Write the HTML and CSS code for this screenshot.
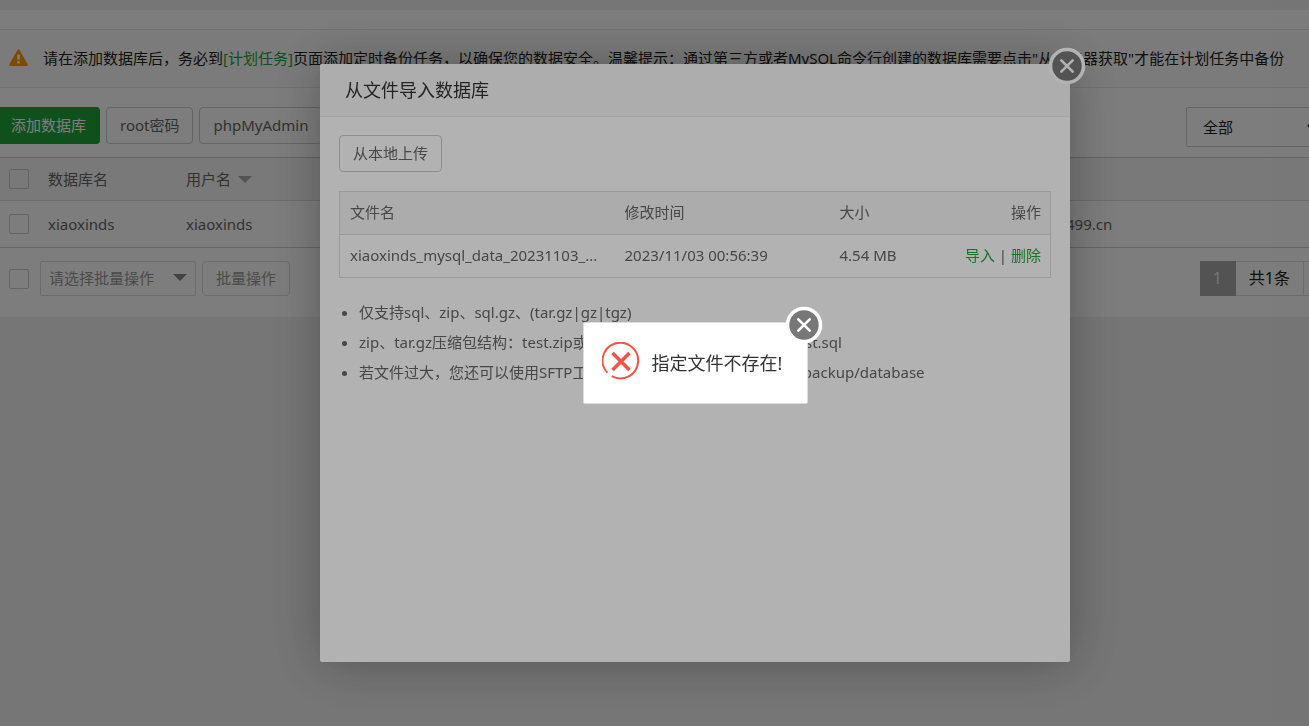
FILE: index.html
```
<!DOCTYPE html>
<html lang="zh-CN">
<head>
  <meta charset="UTF-8">
  <meta name="viewport" content="width=device-width, initial-scale=1.0">
  <title>数据库</title>
  <link rel="stylesheet" href="styles.css">
</head>
<body>
  <main class="panel">
    <div class="notice">
      <svg class="notice-icon" viewBox="0 0 18 16" aria-hidden="true">
        <path d="M8.1.8a1 1 0 0 1 1.8 0l7.8 13.7a1 1 0 0 1-.9 1.5H1.2a1 1 0 0 1-.9-1.5z" fill="#f90"/>
        <path d="M7.6 5.2h2.8l-.4 5H8zM7.8 11.4h2.4v2.4H7.8z" fill="#fff"/>
      </svg>
      <p>请在添加数据库后，务必到<a href="#">[计划任务]</a>页面添加定时备份任务，以确保您的数据安全。温馨提示：通过第三方或者MySQL命令行创建的数据库需要点击"从服务器获取"才能在计划任务中备份</p>
    </div>

    <div class="toolbar">
      <button class="btn btn-success">添加数据库</button>
      <button class="btn">root密码</button>
      <button class="btn">phpMyAdmin</button>
      <select class="type-select" aria-label="数据库类型">
        <option>全部</option>
      </select>
    </div>

    <table class="db-table">
      <colgroup><col class="col-check"><col class="col-name"><col><col class="col-note"></colgroup>
      <thead>
        <tr>
          <th><input type="checkbox" class="check" aria-label="全选"></th>
          <th>数据库名</th>
          <th>用户名<i class="caret"></i></th>
          <th></th>
        </tr>
      </thead>
      <tbody>
        <tr>
          <td><input type="checkbox" class="check" aria-label="xiaoxinds"></td>
          <td>xiaoxinds</td>
          <td>xiaoxinds</td>
          <td>499.cn</td>
        </tr>
      </tbody>
    </table>

    <div class="table-foot">
      <input type="checkbox" class="check" aria-label="全选">
      <div class="batch">
        <select class="batch-select" aria-label="批量操作" disabled>
          <option>请选择批量操作</option>
        </select>
        <i class="caret"></i>
      </div>
      <button class="btn btn-batch" disabled>批量操作</button>
      <div class="pager">
        <span class="current">1</span><span>共1条</span><span></span>
      </div>
    </div>
  </main>

  <div class="layer">
    <section class="modal" role="dialog" aria-labelledby="importTitle">
      <h2 id="importTitle" class="modal-title">从文件导入数据库</h2>
      <button class="close" aria-label="关闭">
        <svg viewBox="0 0 38 38"><circle cx="19" cy="19" r="16.5" fill="#777" stroke="#fff" stroke-width="3.6"/><path d="M13.3 13.3l11.4 11.4M24.7 13.3L13.3 24.7" stroke="#fff" stroke-width="2.6" stroke-linecap="round"/></svg>
      </button>
      <div class="modal-body">
        <button class="btn">从本地上传</button>
        <table class="file-table">
          <colgroup><col class="col-file"><col class="col-time"><col class="col-size"><col></colgroup>
          <thead>
            <tr><th>文件名</th><th>修改时间</th><th>大小</th><th class="right">操作</th></tr>
          </thead>
          <tbody>
            <tr>
              <td>xiaoxinds_mysql_data_20231103_...</td>
              <td>2023/11/03 00:56:39</td>
              <td>4.54 MB</td>
              <td class="right"><a href="#">导入</a> | <a href="#">删除</a></td>
            </tr>
          </tbody>
        </table>
        <ul class="help">
          <li>仅支持sql、zip、sql.gz、(tar.gz|gz|tgz)</li>
          <li>zip、tar.gz压缩包结构：test.zip或test.tar.gz压缩包内，必须包含test.sql</li>
          <li>若文件过大，您还可以使用SFTP工具，将数据库文件上传到 /www/backup/database</li>
        </ul>
      </div>
    </section>
  </div>

  <div class="layer">
    <div class="msg" role="alert">
      <svg class="msg-icon" viewBox="0 0 38 38" fill="none" stroke="#ef5448">
        <path d="M5.4 30.8A17.8 17.8 0 1 1 9.8 34.2" stroke-width="2"/>
        <path d="M10.5 11l17 17M27.5 11l-17 17" stroke-width="3.6"/>
      </svg>
      <p>指定文件不存在!</p>
      <button class="close" aria-label="关闭">
        <svg viewBox="0 0 38 38"><circle cx="19" cy="19" r="16.5" fill="#777" stroke="#fff" stroke-width="3.6"/><path d="M13.3 13.3l11.4 11.4M24.7 13.3L13.3 24.7" stroke="#fff" stroke-width="2.6" stroke-linecap="round"/></svg>
      </button>
    </div>
  </div>
</body>
</html>
```
FILE: styles.css
```
*{box-sizing:border-box}
body{margin:0;min-height:100vh;overflow:hidden;background:#f1f1f1;color:#666;font:15px/20px "Noto Sans","Noto Sans CJK SC",sans-serif;font-weight:400}
p,h2,ul{margin:0;padding:0}
a{color:#20a53a;text-decoration:none}
button,select,input{font:inherit;color:inherit;margin:0}
button{cursor:pointer}
table{width:100%;border-collapse:collapse;table-layout:fixed}
th,td{padding:0;text-align:left;font-weight:400}

/* page */
.panel{margin-top:10px;padding:19px 0 21px;background:#fff;overflow:hidden}
.notice{display:flex;align-items:center;gap:15px;height:59px;padding:0 0 2px 9px;background:#fafafa;border-top:1px solid #e8e8e8;border-bottom:1px solid #e8e8e8;color:#222;white-space:nowrap}
.notice-icon{width:19px;height:17px;flex-shrink:0}
.btn{height:37px;padding:0 13px 2px;background:transparent;border:1px solid #ccc;border-radius:4px;white-space:nowrap}
.btn-success{padding-left:11px;background:#20a53a;border-color:#20a53a;border-left:0;border-radius:0 4px 4px 0;color:#fff}
.toolbar{display:flex;gap:6px;padding:19px 0 10px}
.type-select{width:135px;height:40px;margin:0 -12px 0 auto;padding-left:12px;background:transparent;border:1px solid #ccc;border-radius:2px;color:#222}
.check{display:block;appearance:none;width:20px;height:20px;background:transparent;border:1px solid #ccc;border-radius:2px}
.caret{display:inline-block;margin-left:7px;border:7px solid transparent;border-top-color:#aaa;border-bottom:0;vertical-align:2px}

.db-table{border-top:1px solid #ccc;border-bottom:1px solid #ccc}
.db-table th{height:43px;background:#f6f6f6;border-bottom:1px solid #ddd}
.db-table td{height:47px}
.db-table th:first-child,.db-table td:first-child{padding-left:9px}
.col-check{width:48px}
.col-name{width:138px}
.col-note{width:243px}

.table-foot{display:flex;align-items:center;padding:13px 0 0 9px}
.batch{position:relative;margin:0 6px 0 11px}
.batch-select{display:block;appearance:none;width:156px;height:35px;padding:0 8px 2px;background:transparent;border:1px solid #ddd;border-radius:2px;color:#999;opacity:1}
.batch .caret{position:absolute;top:13px;right:9px;border-top-color:#888}
.btn-batch{height:35px;border-color:#ddd;color:#999}
.pager{display:flex;height:35px;margin:0 -12px 0 auto;font-size:16px;line-height:33px;color:#222}
.pager span{min-width:17px;padding:0 13px;border:1px solid #e0e0e0;border-left:0}
.pager span:last-child{padding:0}
.pager .current{background:#aaa;border-color:#aaa;color:#eee}

/* layers */
.layer{position:fixed;inset:0 -81px 0 0;display:flex;align-items:center;justify-content:center;background:rgba(0,0,0,.3)}
.modal{position:relative;width:750px;min-height:598px;background:#fff;border-radius:2px;box-shadow:1px 1px 50px rgba(0,0,0,.3)}
.modal-title{height:53px;padding-left:25px;background:#f8f8f8;border-bottom:1px solid #eee;border-radius:2px 2px 0 0;color:#333;font-size:18px;line-height:52px;font-weight:400}
.modal-body{padding:18px 19px}
.file-table{margin-top:19px;border:1px solid #ddd}
.file-table th,.file-table td{height:43px;padding:0 10px 2px;border-bottom:1px solid #ddd;white-space:nowrap}
.file-table th{background:#f6f6f6}
.file-table .right{padding-right:9px;text-align:right}
.col-file{width:275px}
.col-time{width:215px}
.col-size{width:100px}
.help{margin-top:19px;padding-left:20px;line-height:30px;white-space:nowrap}
.close{position:absolute;top:-17px;right:-16px;width:38px;height:38px;padding:0;background:none;border:0}
.close svg{display:block;width:38px;height:38px}
.msg{position:relative;display:flex;align-items:center;gap:12px;width:225px;height:82px;padding:0 18px 4px;background:#fff;border:1px solid #ddd;border-radius:2px;color:#333;font-size:18px;white-space:nowrap}
.msg p{padding-top:3px}
.msg-icon{width:38px;height:38px;flex-shrink:0}
```
